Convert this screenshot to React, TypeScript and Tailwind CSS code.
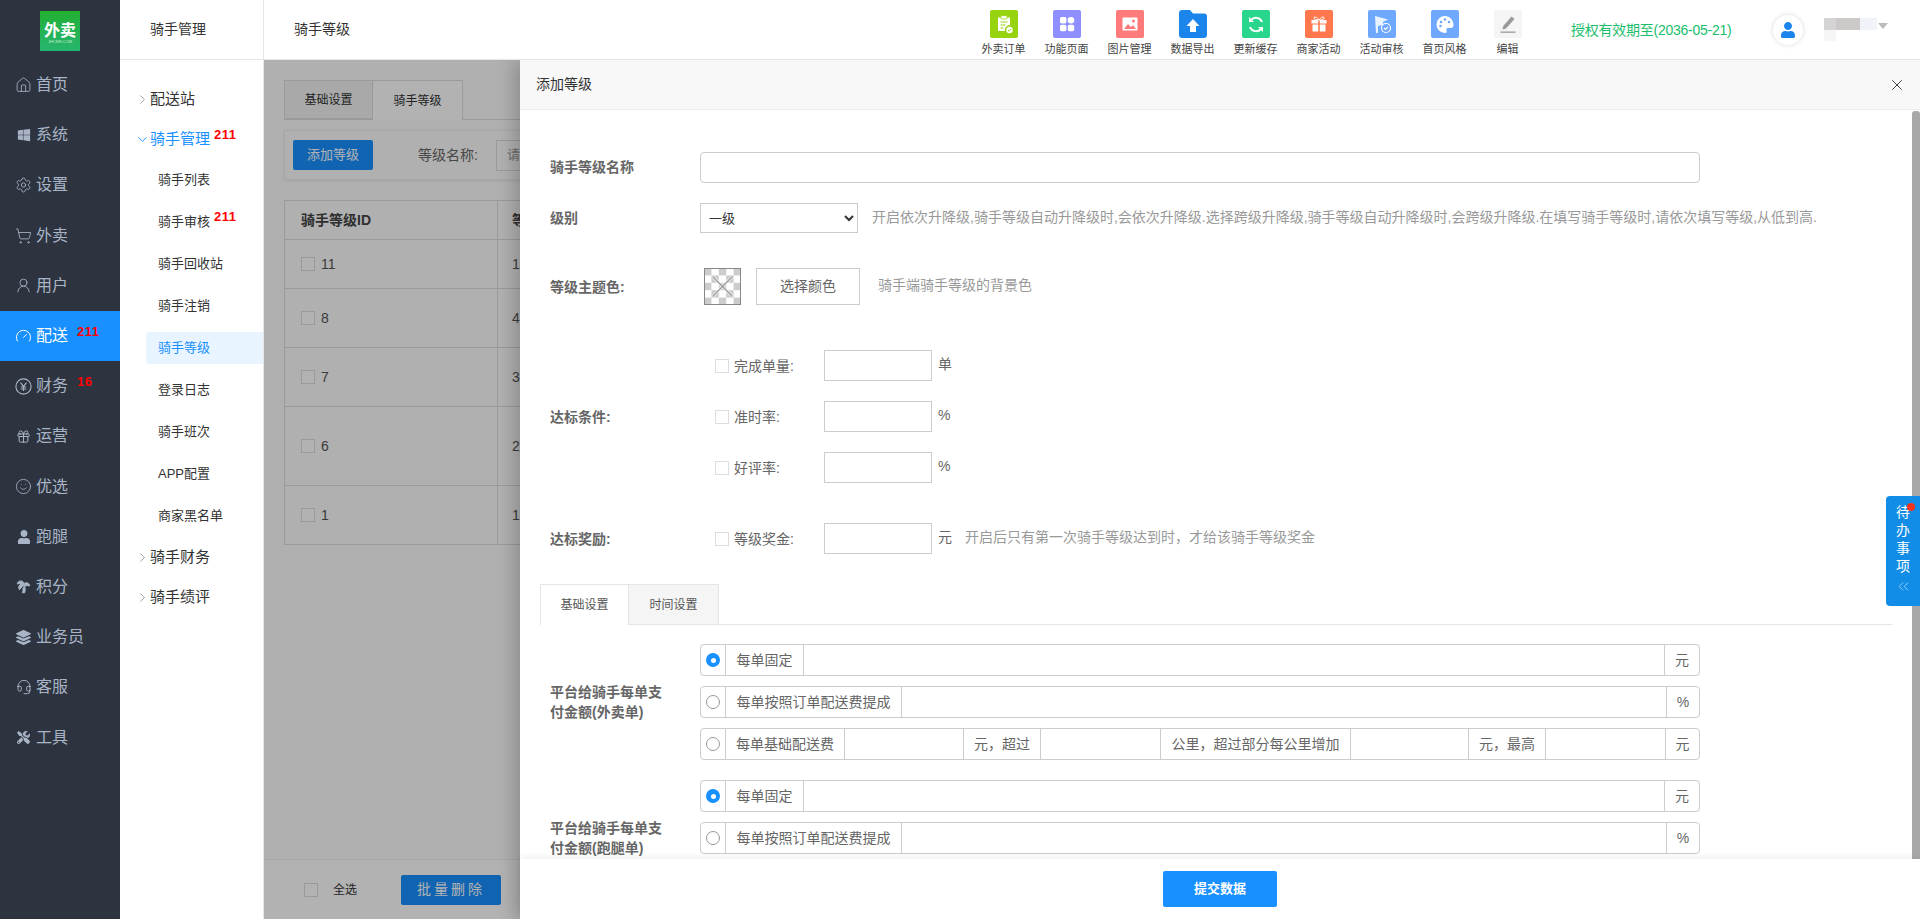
import React from 'react';
import {
  ChevronDown,
  ChevronRight,
  ChevronsLeft,
  Gauge,
  Gift,
  Headset,
  Home,
  Settings,
  ShoppingCart,
  Smile,
  TreePalm,
  UserRound,
  X,
} from 'lucide-react';
import { FaLayerGroup, FaTools, FaUser, FaWindows } from 'react-icons/fa';

const YenCircle = () => (
  <svg width="17" height="17" viewBox="0 0 17 17" fill="none" stroke="currentColor" strokeWidth="1.1">
    <circle cx="8.5" cy="8.5" r="7.6" />
    <path d="M5.6 4.6l2.9 4 2.9-4M8.5 8.6v4.4M5.8 9h5.4M5.8 11h5.4" />
  </svg>
);

const MAIN_MENU = [
  { label: '首页', icon: <Home size={18} strokeWidth={1.2} /> },
  { label: '系统', icon: <FaWindows size={14} /> },
  { label: '设置', icon: <Settings size={18} strokeWidth={1.2} /> },
  { label: '外卖', icon: <ShoppingCart size={18} strokeWidth={1.2} /> },
  { label: '用户', icon: <UserRound size={19} strokeWidth={1.2} /> },
  { label: '配送', icon: <Gauge size={20} strokeWidth={1.4} />, active: true, badge: '211' },
  { label: '财务', icon: <YenCircle />, badge: '16' },
  { label: '运营', icon: <Gift size={15} strokeWidth={1.6} /> },
  { label: '优选', icon: <Smile size={17} strokeWidth={1.2} /> },
  { label: '跑腿', icon: <FaUser size={14} /> },
  { label: '积分', icon: <TreePalm size={15} strokeWidth={1.4} fill="currentColor" /> },
  { label: '业务员', icon: <FaLayerGroup size={15} /> },
  { label: '客服', icon: <Headset size={16} strokeWidth={1.4} /> },
  { label: '工具', icon: <FaTools size={13} /> },
];

const SUB_ITEMS = [
  { label: '骑手列表' },
  { label: '骑手审核', badge: '211' },
  { label: '骑手回收站' },
  { label: '骑手注销' },
  { label: '骑手等级', active: true },
  { label: '登录日志' },
  { label: '骑手班次' },
  { label: 'APP配置' },
  { label: '商家黑名单' },
];

const TOP_TOOLS = [
  {
    label: '外卖订单',
    tile: 'bg-[#97d30f]',
    glyph: (
      <>
        <path d="M9 7.5h10a1 1 0 011 1V15a5 5 0 00-5 6H9a1 1 0 01-1-1V8.5a1 1 0 011-1z" fill="#fff" />
        <rect x="11" y="5.5" width="6" height="3.5" rx="1" fill="#fff" stroke="#97d30f" strokeWidth=".8" />
        <path d="M10.5 12h7M10.5 15h5M10.5 18h3" stroke="#97d30f" strokeWidth="1.2" />
        <circle cx="19.5" cy="20" r="3.2" fill="#fff" />
        <path d="M18 20l1.2 1.2 2-2.2" stroke="#97d30f" strokeWidth="1" fill="none" />
      </>
    ),
  },
  {
    label: '功能页面',
    tile: 'bg-[#8f8fff]',
    glyph: (
      <>
        <rect x="7" y="7" width="6.4" height="6.4" rx="1.6" fill="#fff" />
        <circle cx="18" cy="10.2" r="3.3" fill="#fff" />
        <rect x="7" y="14.8" width="6.4" height="6.4" rx="1.6" fill="#fff" />
        <rect x="14.8" y="14.8" width="6.4" height="6.4" rx="1.6" fill="#fff" />
      </>
    ),
  },
  {
    label: '图片管理',
    tile: 'bg-[#ff7a7a]',
    glyph: (
      <>
        <rect x="6.5" y="7.5" width="15" height="13" rx="1" fill="#fff" />
        <path d="M8 19l4-5 3 3 2-2 3 4z" fill="#ff7a7a" />
        <circle cx="17.5" cy="11" r="1.5" fill="#ff7a7a" />
      </>
    ),
  },
  {
    label: '数据导出',
    tile: 'bg-transparent',
    glyph: (
      <>
        <path d="M0 3a3 3 0 013-3h8l3 3.5h11a3 3 0 013 3V25a3 3 0 01-3 3H3a3 3 0 01-3-3z" fill="#1c85ec" />
        <path d="M14 9l6.5 7H17v6h-6v-6H7.5z" fill="#fff" />
      </>
    ),
  },
  {
    label: '更新缓存',
    tile: 'bg-[#2ad68b]',
    glyph: (
      <>
        <path d="M20 12a6.5 6.5 0 00-11-2" stroke="#fff" strokeWidth="2" fill="none" />
        <path d="M8 17a6.5 6.5 0 0011 2" stroke="#fff" strokeWidth="2" fill="none" />
        <path d="M7 7v5h5zM21 22v-5h-5z" fill="#fff" />
      </>
    ),
  },
  {
    label: '商家活动',
    tile: 'bg-[#ff784d]',
    glyph: (
      <>
        <rect x="6.5" y="10" width="15" height="3.5" fill="#fff" />
        <rect x="7.5" y="14.5" width="13" height="7" fill="#fff" />
        <rect x="13.2" y="10" width="1.6" height="12" fill="#ff784d" />
        <path d="M14 10c-2-3-5-4-5-2s3 2 5 2c2 0 5 0 5-2s-3-1-5 2z" stroke="#fff" strokeWidth="1" fill="none" />
      </>
    ),
  },
  {
    label: '活动审核',
    tile: 'bg-[#6ea8ff]',
    glyph: (
      <>
        <path d="M7 6l13 3.5-5 2.5v3l-5 1v7H8z" fill="#fff" opacity=".85" />
        <circle cx="18" cy="18" r="4.5" fill="#6ea8ff" stroke="#fff" strokeWidth="1.2" />
        <path d="M16 18l1.5 1.5 2.5-2.7" stroke="#fff" strokeWidth="1.2" fill="none" />
      </>
    ),
  },
  {
    label: '首页风格',
    tile: 'bg-[#6ea8ff]',
    glyph: (
      <>
        <path d="M14 6a8.5 8.5 0 100 17c2 0 2-1.5 1.5-2.5-.6-1.3.2-2.5 1.6-2.5h2.400a3 3 0 003-3c0-5-4-9-8.500-9z" fill="#fff" />
        <circle cx="10" cy="12" r="1.3" fill="#6ea8ff" />
        <circle cx="14" cy="9.5" r="1.3" fill="#6ea8ff" />
        <circle cx="18" cy="12" r="1.3" fill="#6ea8ff" />
        <circle cx="9.5" cy="16" r="1.3" fill="#6ea8ff" />
      </>
    ),
  },
  {
    label: '编辑',
    tile: 'bg-[#f5f5f5]',
    glyph: (
      <>
        <path d="M17.5 6.5l3 2.5-8.5 9.5-3.5 1 .8-3.5z" fill="#999" />
        <rect x="6.5" y="21.5" width="15" height="1.3" fill="#999" />
      </>
    ),
  },
];

const TABLE_ROWS = [
  { id: '11', name: '1', h: 'h-[49px]' },
  { id: '8', name: '4', h: 'h-[59px]' },
  { id: '7', name: '3', h: 'h-[59px]' },
  { id: '6', name: '2', h: 'h-[79px]' },
  { id: '1', name: '1', h: 'h-[59px]' },
];

const Badge = ({ children, className }: { children: React.ReactNode; className: string }) => (
  <span className={`absolute text-[13px] font-bold leading-none tracking-[0.5px] text-[#ff0000] ${className}`}>
    {children}
  </span>
);

const Check = () => <span className="block h-[14px] w-[14px] shrink-0 border border-[#ddd] bg-white" />;

const Radio = ({ on }: { on?: boolean }) => (
  <span className="flex w-[24px] shrink-0 items-center justify-center">
    {on ? (
      <span className="flex h-[14px] w-[14px] items-center justify-center rounded-full bg-[#1890ff]">
        <span className="h-[5px] w-[5px] rounded-full bg-white" />
      </span>
    ) : (
      <span className="h-[14px] w-[14px] rounded-full border border-[#999] bg-white" />
    )}
  </span>
);

const Addon = ({ children, className = '' }: { children?: React.ReactNode; className?: string }) => (
  <span className={`flex shrink-0 items-center justify-center border-l border-[#ccc] text-[14px] text-[#666] ${className}`}>
    {children}
  </span>
);

const Group = ({ children }: { children: React.ReactNode }) => (
  <div className="flex h-[32px] w-[1000px] overflow-hidden rounded-[4px] border border-[#ccc] bg-white">{children}</div>
);

const FixedGroup = () => (
  <Group>
    <Radio on />
    <Addon className="w-[78px]">每单固定</Addon>
    <Addon className="flex-1" />
    <Addon className="w-[35px]">元</Addon>
  </Group>
);

const PercentGroup = () => (
  <Group>
    <Radio />
    <Addon className="w-[176px]">每单按照订单配送费提成</Addon>
    <Addon className="flex-1" />
    <Addon className="w-[33px]">%</Addon>
  </Group>
);

const ConditionRow = ({
  label,
  unit,
  className,
  children,
}: {
  label: string;
  unit: string;
  className: string;
  children?: React.ReactNode;
}) => (
  <div className={`flex h-[31px] items-center pl-[165px] ${className}`}>
    <Check />
    <span className="ml-[5px] w-[90px] text-[14px] leading-none text-[#666]">{label}</span>
    <span className="block h-[31px] w-[108px] border border-[#ccc] bg-white" />
    <span className="ml-[6px] -translate-y-[2px] text-[14px] leading-none text-[#666]">{unit}</span>
    {children}
  </div>
);

const FormLabel = ({ children, className = '' }: { children: React.ReactNode; className?: string }) => (
  <span className={`w-[150px] shrink-0 text-[14px] font-bold leading-[20px] text-[#666] ${className}`}>{children}</span>
);

const Drawer = () => (
  <div className="absolute inset-y-0 right-0 flex w-[1400px] flex-col bg-white shadow-[-6px_0_16px_rgba(0,0,0,0.2)]">
    <div className="flex h-[50px] shrink-0 items-center justify-between border-b border-[#eee] bg-[#f8f8f8] pl-[16px] pr-[14px]">
      <span className="text-[14px] text-[#333]">添加等级</span>
      <X size={18} strokeWidth={1.1} className="text-[#222]" />
    </div>

    <div className="relative min-h-0 flex-1 overflow-hidden pl-[30px]">
      <div className="mt-[42px] flex h-[30px] items-center">
        <FormLabel>骑手等级名称</FormLabel>
        <span className="block h-[31px] w-[1000px] rounded-[4px] border border-[#ccc]" />
      </div>

      <div className="mt-[21px] flex h-[30px] items-center">
        <FormLabel>级别</FormLabel>
        <select className="h-[30px] w-[158px] border border-[#ccc] bg-white pl-[4px] text-[13px] text-[#333]">
          <option>一级</option>
        </select>
        <span className="ml-[14px] -translate-y-[1px] text-[14px] text-[#999]">
          开启依次升降级,骑手等级自动升降级时,会依次升降级.选择跨级升降级,骑手等级自动升降级时,会跨级升降级.在填写骑手等级时,请依次填写等级,从低到高.
        </span>
      </div>

      <div className="mt-[35px] flex h-[37px] items-center">
        <FormLabel>等级主题色:</FormLabel>
        <svg width="37" height="37" viewBox="0 0 37 37" className="ml-[4px] shrink-0">
          <rect width="37" height="37" fill="#fff" />
          {[0, 1, 2, 3, 4].map(r =>
            [0, 1, 2, 3, 4].map(c =>
              (r + c) % 2 === 0 ? <rect key={`${r}-${c}`} x={c * 7.4} y={r * 7.4} width="7.4" height="7.4" fill="#ccc" /> : null
            )
          )}
          <path d="M9 9l19 19M28 9L9 28" stroke="#fff" strokeWidth="3" opacity=".7" />
          <path d="M9 9l19 19M28 9L9 28" stroke="#999" strokeWidth="1.2" />
          <rect x=".5" y=".5" width="36" height="36" fill="none" stroke="#888" />
        </svg>
        <button className="ml-[15px] h-[37px] w-[104px] border border-[#ccc] bg-white text-[14px] text-[#666]">选择颜色</button>
        <span className="ml-[18px] -translate-y-[1px] text-[14px] text-[#999]">骑手端骑手等级的背景色</span>
      </div>

      <div className="relative mt-[45px]">
        <FormLabel className="absolute left-0 top-[57px]">达标条件:</FormLabel>
        <ConditionRow label="完成单量:" unit="单" className="" />
        <ConditionRow label="准时率:" unit="%" className="mt-[20px]" />
        <ConditionRow label="好评率:" unit="%" className="mt-[20px]" />
      </div>

      <div className="relative mt-[40px]">
        <FormLabel className="absolute left-0 top-[6px]">达标奖励:</FormLabel>
        <ConditionRow label="等级奖金:" unit="元" className="">
          <span className="ml-[13px] -translate-y-[2px] text-[14px] leading-none text-[#999]">
            开启后只有第一次骑手等级达到时，才给该骑手等级奖金
          </span>
        </ConditionRow>
      </div>

      <div className="-ml-[10px] mr-[28px] mt-[30px] flex h-[41px] border-b border-[#e5e5e5]">
        <span className="flex h-[41px] w-[89px] items-center justify-center border-l border-r border-t border-[#e5e5e5] bg-white text-[12px] text-[#555]">
          基础设置
        </span>
        <span className="flex h-[40px] w-[90px] items-center justify-center border-r border-t border-[#e5e5e5] bg-[#f5f5f5] text-[12px] text-[#555]">
          时间设置
        </span>
      </div>

      <div className="mt-[19px] flex">
        <FormLabel className="mt-[38px] w-[150px] pr-[30px]">平台给骑手每单支付金额(外卖单)</FormLabel>
        <div className="flex flex-col gap-[10px]">
          <FixedGroup />
          <PercentGroup />
          <Group>
            <Radio />
            <Addon className="w-[119px]">每单基础配送费</Addon>
            <Addon className="w-[119px]" />
            <Addon className="w-[77px]">元，超过</Addon>
            <Addon className="w-[120px]" />
            <Addon className="w-[190px]">公里，超过部分每公里增加</Addon>
            <Addon className="w-[118px]" />
            <Addon className="w-[77px]">元，最高</Addon>
            <Addon className="w-[120px]" />
            <Addon className="flex-1">元</Addon>
          </Group>
        </div>
      </div>

      <div className="mt-[20px] flex">
        <FormLabel className="mt-[38px] w-[150px] pr-[30px]">平台给骑手每单支付金额(跑腿单)</FormLabel>
        <div className="flex flex-col gap-[10px]">
          <FixedGroup />
          <PercentGroup />
        </div>
      </div>

      {/* scrollbar thumb */}
      <span className="absolute bottom-0 right-0 top-[1px] w-[8px] rounded-t-[3px] bg-[#a8a8a8]" />
    </div>

    <div className="relative flex h-[60px] shrink-0 items-center justify-center bg-white shadow-[0_-3px_6px_rgba(0,0,0,0.05)]">
      <button className="h-[36px] w-[114px] rounded-[2px] bg-[#1890ff] text-[13px] font-bold text-white">提交数据</button>
    </div>

    {/* todo tab */}
    <div className="absolute right-0 top-[436px] flex h-[110px] w-[34px] flex-col items-center rounded-l-[4px] bg-[#118de8] pt-[7px] text-white">
      <span className="absolute right-[5px] top-[7px] h-[8px] w-[8px] rounded-full bg-[#f5331f]" />
      {['待', '办', '事', '项'].map(c => (
        <span key={c} className="h-[18px] text-[14px] leading-[18px]">
          {c}
        </span>
      ))}
      <ChevronsLeft size={17} strokeWidth={1} className="mt-[3px] text-[#cfe8fb]" />
    </div>
  </div>
);

const Backdrop = () => (
  <div className="flex h-full flex-col bg-[#fcfcfc]">
    <div className="min-h-0 flex-1 overflow-hidden px-[20px] pt-[20px]">
      <div className="flex h-[40px] border-b border-[#ddd]">
        <span className="flex h-[39px] w-[89px] items-center justify-center border border-[#ddd] bg-[#f2f2f2] text-[12px] text-[#333]">
          基础设置
        </span>
        <span className="flex h-[40px] w-[90px] items-center justify-center border-r border-t border-[#ddd] bg-white text-[12px] text-[#333]">
          骑手等级
        </span>
      </div>
      <div className="mt-[10px] flex h-[50px] items-center border border-[#eee] pl-[8px] shadow-[0_1px_3px_rgba(0,0,0,0.08)]">
        <span className="flex h-[30px] w-[80px] items-center justify-center rounded-[2px] bg-[#1890ff] text-[13px] text-white">添加等级</span>
        <span className="ml-[45px] text-[14px] text-[#666]">等级名称:</span>
        <span className="ml-[18px] flex h-[31px] w-[240px] items-center border border-[#ddd] pl-[10px] text-[13px] text-[#999]">请输入</span>
      </div>
      <div className="mt-[20px] border-l border-r border-t border-[#ddd]">
        <div className="flex h-[39px] items-center border-b border-[#ddd] text-[14px] font-bold text-[#444]">
          <span className="flex h-full w-[213px] items-center border-r border-[#ddd] pl-[16px]">骑手等级ID</span>
          <span className="pl-[14px]">等级</span>
        </div>
        {TABLE_ROWS.map(row => (
          <div key={row.id + row.name} className={`flex items-center border-b border-[#ddd] text-[14px] text-[#555] ${row.h}`}>
            <span className="flex h-full w-[213px] items-center gap-[6px] border-r border-[#ddd] pl-[16px]">
              <Check />
              {row.id}
            </span>
            <span className="pl-[14px]">{row.name}级</span>
          </div>
        ))}
      </div>
    </div>
    <div className="flex h-[60px] shrink-0 items-center border-t border-[#eee] bg-white pl-[40px]">
      <Check />
      <span className="ml-[15px] text-[12px] text-[#333]">全选</span>
      <span className="ml-[44px] flex h-[30px] w-[100px] items-center justify-center rounded-[2px] bg-[#1890ff] text-[14px] tracking-[3px] text-white">
        批量删除
      </span>
    </div>
  </div>
);

const App: React.FC = () => (
  <div className="flex h-screen overflow-hidden bg-white font-['Liberation_Sans','Noto_Sans_CJK_SC',sans-serif]">
    {/* Main sidebar */}
    <aside className="w-[120px] shrink-0 bg-[#2d3440]">
      <div className="flex h-[60px] items-start justify-center pt-[11px]">
        <div className="flex h-[40px] w-[40px] flex-col items-center justify-center bg-gradient-to-b from-[#22b02e] to-[#27b56e] pt-[4px] text-white">
          <span className="text-[16px] font-bold leading-[17px]">外卖</span>
          <span className="text-[4px] leading-[6px] text-[#cdeed6]">JHCMS.COM</span>
        </div>
      </div>
      {MAIN_MENU.map(item => (
        <div
          key={item.label}
          className={`relative flex h-[50.2px] items-center pl-[15px] text-[16px] ${
            item.active ? 'bg-[#1890ff] text-white' : 'text-[#a9b5c6]'
          }`}
        >
          <span className="flex w-[17px] justify-center">{item.icon}</span>
          <span className="ml-[4px] leading-none">{item.label}</span>
          {item.badge ? <Badge className="left-[77px] top-[14px]">{item.badge}</Badge> : null}
        </div>
      ))}
    </aside>

    {/* Sub menu */}
    <nav className="w-[144px] shrink-0 border-r border-[#e6e6e6]">
      <div className="flex h-[60px] items-center border-b border-[#e6e6e6] pl-[30px] text-[14px] text-[#333]">骑手管理</div>
      <div className="pt-[19px]">
        <div className="flex h-[40px] items-center pl-[15px] text-[15px] text-[#333]">
          <ChevronRight size={15} strokeWidth={1.5} className="text-[#999]" />
          <span>配送站</span>
        </div>
        <div className="relative flex h-[40px] items-center pl-[15px] text-[15px] text-[#1890ff]">
          <ChevronDown size={15} strokeWidth={1.5} />
          <span>骑手管理</span>
          <Badge className="left-[94px] top-[9px]">211</Badge>
        </div>
        {SUB_ITEMS.map(item => (
          <div key={item.label} className="relative flex h-[42px] items-center pl-[26px]">
            <span
              className={`flex h-[32px] w-full items-center rounded-l-[4px] pl-[12px] text-[13px] ${
                item.active ? 'bg-[#e8f4ff] text-[#1890ff]' : 'text-[#333]'
              }`}
            >
              {item.label}
            </span>
            {item.badge ? <Badge className="left-[94px] top-[9px]">{item.badge}</Badge> : null}
          </div>
        ))}
        {['骑手财务', '骑手绩评'].map(label => (
          <div key={label} className="flex h-[40px] items-center pl-[15px] text-[15px] text-[#333]">
            <ChevronRight size={15} strokeWidth={1.5} className="text-[#999]" />
            <span>{label}</span>
          </div>
        ))}
      </div>
    </nav>

    {/* Right side */}
    <div className="flex min-w-0 flex-1 flex-col">
      <header className="flex h-[60px] shrink-0 items-center whitespace-nowrap border-b border-[#e6e6e6] pl-[30px]">
        <span className="w-[56px] shrink-0 text-[14px] text-[#333]">骑手等级</span>
        <div className="ml-[622px] flex h-full shrink-0">
          {TOP_TOOLS.map(tool => (
            <div key={tool.label} className="flex w-[63px] flex-col items-center pt-[10px]">
              <svg width="28" height="28" viewBox="0 0 28 28" className={`rounded-[2px] ${tool.tile}`}>
                {tool.glyph}
              </svg>
              <span className="mt-[5px] text-[11px] leading-[12px] text-[#444]">{tool.label}</span>
            </div>
          ))}
        </div>
        <span className="ml-[32px] shrink-0 text-[14px] leading-none tracking-[-0.25px] text-[#19be6b]">授权有效期至(2036-05-21)</span>
        <span className="ml-[42px] flex h-[30px] w-[30px] shrink-0 items-center justify-center rounded-full bg-white shadow-[0_0_5px_rgba(0,0,0,0.15)]">
          <FaUser size={16} className="text-[#1c85ec]" />
        </span>
        <div className="relative ml-[21px] h-[23px] w-[64px] shrink-0 self-center">
          <span className="absolute left-0 top-0 flex h-[12px]">
            <span className="w-[12px] bg-[#d4d4d4]" />
            <span className="w-[24px] bg-[#cdc9c9]" />
            <span className="w-[17px] bg-[#f0f4f8]" />
          </span>
          <span className="absolute left-0 top-[12px] h-[11px] w-[12px] bg-[#f6f6f6]" />
          <span className="absolute left-[54px] top-[5px] h-0 w-0 border-x-[5px] border-t-[6px] border-x-transparent border-t-[#bbb]" />
        </div>
      </header>

      <main className="relative min-h-0 flex-1 overflow-hidden">
        <Backdrop />
        <div className="absolute inset-0 bg-black/30" />
        <Drawer />
      </main>
    </div>
  </div>
);

export default App;
